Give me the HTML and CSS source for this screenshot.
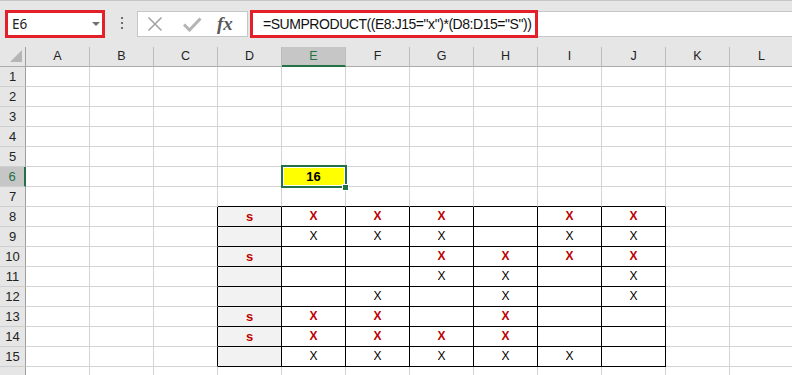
FILE: index.html
```html
<html>
<head>
<title>Book1 - Excel</title>
<meta charset="utf-8">
<link rel="stylesheet" href="styles.css">
</head>
<body>

<!-- formula bar -->
<div class="topbar">
<div class="namebox"><span>E6</span><span class="arrow"></span></div>
<svg class="dots" width="3" height="14" viewBox="0 0 3 14"><rect x="0" y="0" width="2" height="2" fill="#6d6d6d"/><rect x="0" y="5" width="2" height="2" fill="#6d6d6d"/><rect x="0" y="10" width="2" height="2" fill="#6d6d6d"/></svg>
<div class="fnbox">
<svg class="cancel" width="16" height="16" viewBox="0 0 16 16"><path d="M1.5 1.5L14.5 14.5M14.5 1.5L1.5 14.5" stroke="#a3a3a3" stroke-width="1.6" fill="none"/></svg>
<svg class="enter" width="20" height="16" viewBox="0 0 20 16"><path d="M2 8.5L7.5 14L18.5 2.5" stroke="#b4b4b4" stroke-width="3" fill="none"/></svg>
<span class="fx">fx</span>
</div>
<div class="formula">=SUMPRODUCT((E8:J15="x")*(D8:D15="S"))</div>
<div class="fill"></div>
</div>

<!-- sheet -->
<div class="sheet">
<div class="corner"><svg width="25" height="19" viewBox="0 0 25 19"><polygon points="22,3 22,15 10,15" fill="#b5b5b5"/></svg></div><div class="hd">A</div><div class="hd">B</div><div class="hd">C</div><div class="hd">D</div><div class="hd on">E</div><div class="hd">F</div><div class="hd">G</div><div class="hd">H</div><div class="hd">I</div><div class="hd">J</div><div class="hd">K</div><div class="hd">L</div>
<div class="rh">1</div><div></div><div></div><div></div><div></div><div></div><div></div><div></div><div></div><div></div><div></div><div></div><div></div>
<div class="rh">2</div><div></div><div></div><div></div><div></div><div></div><div></div><div></div><div></div><div></div><div></div><div></div><div></div>
<div class="rh">3</div><div></div><div></div><div></div><div></div><div></div><div></div><div></div><div></div><div></div><div></div><div></div><div></div>
<div class="rh">4</div><div></div><div></div><div></div><div></div><div></div><div></div><div></div><div></div><div></div><div></div><div></div><div></div>
<div class="rh">5</div><div></div><div></div><div></div><div></div><div></div><div></div><div></div><div></div><div></div><div></div><div></div><div></div>
<div class="rh on">6</div><div></div><div></div><div></div><div></div><div class="sel">16</div><div></div><div></div><div></div><div></div><div></div><div></div><div></div>
<div class="rh">7</div><div></div><div></div><div></div><div class="tb"></div><div class="tb"></div><div class="tb"></div><div class="tb"></div><div class="tb"></div><div class="tb"></div><div class="tb"></div><div></div><div></div>
<div class="rh">8</div><div></div><div></div><div class="tr"></div><div class="t k r">s</div><div class="t r">X</div><div class="t r">X</div><div class="t r">X</div><div class="t"></div><div class="t r">X</div><div class="t r">X</div><div></div><div></div>
<div class="rh">9</div><div></div><div></div><div class="tr"></div><div class="t k"></div><div class="t">X</div><div class="t">X</div><div class="t">X</div><div class="t"></div><div class="t">X</div><div class="t">X</div><div></div><div></div>
<div class="rh">10</div><div></div><div></div><div class="tr"></div><div class="t k r">s</div><div class="t"></div><div class="t"></div><div class="t r">X</div><div class="t r">X</div><div class="t r">X</div><div class="t r">X</div><div></div><div></div>
<div class="rh">11</div><div></div><div></div><div class="tr"></div><div class="t k"></div><div class="t"></div><div class="t"></div><div class="t">X</div><div class="t">X</div><div class="t"></div><div class="t">X</div><div></div><div></div>
<div class="rh">12</div><div></div><div></div><div class="tr"></div><div class="t k"></div><div class="t"></div><div class="t">X</div><div class="t"></div><div class="t">X</div><div class="t"></div><div class="t">X</div><div></div><div></div>
<div class="rh">13</div><div></div><div></div><div class="tr"></div><div class="t k r">s</div><div class="t r">X</div><div class="t r">X</div><div class="t"></div><div class="t r">X</div><div class="t"></div><div class="t"></div><div></div><div></div>
<div class="rh">14</div><div></div><div></div><div class="tr"></div><div class="t k r">s</div><div class="t r">X</div><div class="t r">X</div><div class="t r">X</div><div class="t r">X</div><div class="t"></div><div class="t"></div><div></div><div></div>
<div class="rh">15</div><div></div><div></div><div class="tr"></div><div class="t k"></div><div class="t">X</div><div class="t">X</div><div class="t">X</div><div class="t">X</div><div class="t">X</div><div class="t"></div><div></div><div></div>
<div class="rh"></div><div></div><div></div><div></div><div></div><div></div><div></div><div></div><div></div><div></div><div></div><div></div><div></div>
</div>

</body>
</html>
```

FILE: styles.css
```css
body{
margin:0;
background-color:#FFF;
overflow:hidden;
font-family:"Liberation Sans",Arial,sans-serif;
}

/* formula bar */
.topbar{
height:47px;
box-sizing:border-box;
border-top:1px solid #C6C6C6;
background-color:#E6E6E6;
display:flex;
align-items:center;
padding-left:5px;
}
.namebox{
width:100px;
height:28px;
box-sizing:border-box;
border:3px solid #E3202A;
background-color:#FFF;
display:flex;
align-items:center;
justify-content:space-between;
padding:0 2px 0 4px;
font-family:"Noto Sans",sans-serif;
font-size:13.5px;
color:#222;
}
.arrow{
width:0;
height:0;
border-left:4px solid transparent;
border-right:4px solid transparent;
border-top:4px solid #707070;
}
.dots{margin-left:16px;}
.fnbox{
margin-left:13px;
width:111px;
height:26px;
box-sizing:border-box;
border:1px solid #C6C6C6;
background-color:#FFF;
display:flex;
align-items:center;
padding-left:9px;
}
.enter{margin-left:19px;}
.fx{
margin-left:15px;
font-family:"Liberation Serif",serif;
font-style:italic;
font-weight:bold;
font-size:19px;
color:#5A5A5A;
line-height:20px;
}
.formula{
margin-left:2px;
width:288px;
height:28px;
box-sizing:border-box;
border:3px solid #E3202A;
background-color:#FFF;
padding-left:10px;
display:flex;
align-items:center;
font-size:14px;
letter-spacing:-0.45px;
color:#111;
white-space:nowrap;
overflow:hidden;
}
.fill{
flex:1;
height:26px;
box-sizing:border-box;
border-top:1px solid #C6C6C6;
border-bottom:1px solid #C6C6C6;
background-color:#FFF;
}

/* grid */
.sheet{
display:grid;
grid-template-columns:26px repeat(12,64px);
grid-auto-rows:20px;
font-size:13px;
}
.sheet > div{
box-sizing:border-box;
border-right:1px solid #D4D4D4;
border-bottom:1px solid #D4D4D4;
text-align:center;
line-height:19px;
color:#000;
}
.sheet > .corner{
background-color:#E6E6E6;
border-right:1px solid #9F9F9F;
border-bottom:1px solid #ABABAB;
line-height:0;
}
.sheet > .hd{
background-color:#E6E6E6;
border-right:1px solid #BDBDBD;
border-bottom:1px solid #ABABAB;
font-size:12.5px;
color:#222;
}
.sheet > .hd.on{
background-color:#C6C6C6;
border-bottom:2px solid #217346;
color:#217346;
}
.sheet > .rh{
background-color:#E6E6E6;
border-right:1px solid #9F9F9F;
border-bottom:1px solid #CFCFCF;
color:#222;
}
.sheet > .rh.on{
background-color:#C6C6C6;
border-right:2px solid #217346;
color:#217346;
}

.sheet > .tb{border-bottom-color:#000;}
.sheet > .tr{border-right-color:#000;}
.sheet > .t{border-right-color:#000;border-bottom-color:#000;font-size:12px;}
.sheet > .k{background-color:#F2F2F2;font-size:13px;}
.sheet > .r{color:#C00000;font-weight:bold;}

/* active cell E6 */
.sheet > .sel{
position:relative;
z-index:1;
background-color:#FFFF00;
font-weight:bold;
}
.sel:after{
content:"";
position:absolute;
left:-1px;
top:-2px;
width:66px;
height:23px;
box-sizing:border-box;
border:2px solid #217346;
box-shadow:inset 0 0 0 1px #FFF;
}
.sel:before{
content:"";
position:absolute;
z-index:2;
left:60px;
top:17px;
width:7px;
height:7px;
box-sizing:border-box;
border:1px solid #FFF;
background-color:#217346;
}
```
